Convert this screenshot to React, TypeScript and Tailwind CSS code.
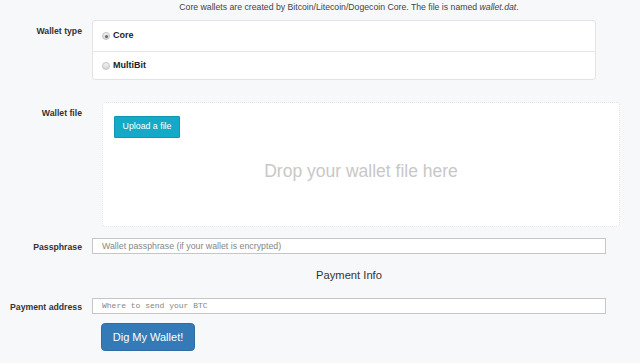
import { FC } from "react";

interface RadioProps {
    label: string;
    checked?: boolean;
}

const Radio: FC<RadioProps> = ({ label, checked }) => {
    return (
        <div className="h-[30px] flex items-center pl-[9px] gap-[3px]">
            <span className="w-[8px] h-[8px] rounded-full border border-[#c2c2c2] bg-gradient-to-b from-[#f4f4f4] to-[#d6d6d6] flex items-center justify-center">
                {checked && <span className="w-[3px] h-[3px] rounded-full bg-[#666]" />}
            </span>
            <span className="font-bold text-[9px] text-[#222]">{label}</span>
        </div>
    );
};

const Label: FC<{ text: string; className?: string }> = ({ text, className }) => {
    return (
        <div className={"w-[82px] shrink-0 text-right font-bold text-[8.7px] text-[#333] " + (className ?? "")}>
            {text}
        </div>
    );
};

export default function App() {
    return (
        <div className="min-h-screen bg-[#f7f8fa] font-['Liberation_Sans',Arial,sans-serif] text-[#333]">
            <div className="flex gap-[10px]">
                <div className="w-[82px] shrink-0" />
                <p className="w-[514px] h-[14px] leading-[14px] text-center text-[8.7px] text-[#444]">
                    Core wallets are created by Bitcoin/Litecoin/Dogecoin Core. The file is named <i>wallet.dat</i>.
                </p>
            </div>

            <div className="flex gap-[10px] mt-[6px]">
                <Label text="Wallet type" className="pt-[5px]" />
                <div className="w-[504px] h-[60px] bg-white border border-[#e3e3e3] rounded-[3px] flex flex-col">
                    <div className="border-b border-[#e8e8e8]">
                        <Radio label="Core" checked />
                    </div>
                    <Radio label="MultiBit" />
                </div>
            </div>

            <div className="flex gap-[10px] mt-[22px]">
                <Label text="Wallet file" className="pt-[5px]" />
                <div className="ml-[10px] w-[518px] h-[125px] bg-white border border-dotted border-[#e2e2e2] rounded-[4px] flex flex-col pl-[11px] pt-[13px]">
                    <button className="w-[66px] h-[22px] bg-[#14a9c6] border border-[#1096b0] text-white text-[8.8px] rounded-[1px]">
                        Upload a file
                    </button>
                    <div className="mt-[23px] pr-[11px] text-center text-[17.5px] leading-[20px] text-[#c8c8c8]">
                        Drop your wallet file here
                    </div>
                </div>
            </div>

            <div className="flex gap-[10px] mt-[10px] items-center">
                <Label text="Passphrase" className="pt-[4px]" />
                <input
                    className="w-[514px] h-[16px] bg-white border border-[#c6c6c6] px-[9px] text-[8.8px] placeholder:text-[#858585] outline-none"
                    placeholder="Wallet passphrase (if your wallet is encrypted)"
                />
            </div>

            <div className="flex gap-[10px]">
                <div className="w-[82px] shrink-0" />
                <h4 className="w-[514px] mt-[13px] text-center text-[11.2px] leading-[16px] text-[#333]">
                    Payment Info
                </h4>
            </div>

            <div className="flex gap-[10px] mt-[14px] items-center">
                <Label text="Payment address" className="pt-[4px]" />
                <input
                    className="w-[514px] h-[16px] bg-white border border-[#c6c6c6] px-[9px] text-[8px] font-['Liberation_Mono',monospace] placeholder:text-[#858585] outline-none"
                    placeholder="Where to send your BTC"
                />
            </div>

            <div className="flex gap-[10px] mt-[9px]">
                <div className="w-[82px] shrink-0" />
                <button className="ml-[9px] w-[94px] h-[28px] bg-[#337ab7] border border-[#2e6da4] rounded-[4px] text-white text-[11px]">
                    Dig My Wallet!
                </button>
            </div>
        </div>
    );
}
